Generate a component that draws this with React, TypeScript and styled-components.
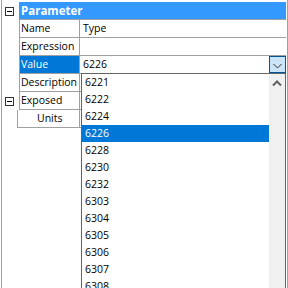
import React from "react";
import styled, { createGlobalStyle } from "styled-components";

const Global = createGlobalStyle`
  html, body { margin: 0; padding: 0; background: #fff; }
  body {
    font-family: "Open Sans", "Liberation Sans", sans-serif;
    font-size: 10.5px;
    color: #000;
  }
  #root { width: 288px; height: 288px; }
`;

const Screen = styled.div`
  position: relative;
  width: 288px;
  height: 288px;
  overflow: hidden;
  background: #fff;
`;

const Frame = styled.div`
  box-sizing: border-box;
  width: 287px;
  height: 288px;
  margin-left: 1px;
  border-left: 1px solid #a0a0a0;
  border-right: 1px solid #a0a0a0;
  padding: 2px 1px 0 0;
  display: flex;
  flex-direction: column;
`;

const Row = styled.div`
  display: flex;
  height: 18px;
`;

const Gutter = styled.div<{ $w: number }>`
  flex: none;
  width: ${(p) => p.$w}px;
  display: flex;
  align-items: center;
  padding-left: 3px;
  box-sizing: border-box;
`;

const Category = styled.div`
  flex: 1;
  box-sizing: border-box;
  background: #3399ff;
  border-bottom: 1px solid #a0a0a0;
  color: #fff;
  font-weight: bold;
  font-size: 11.5px;
  line-height: 17px;
  padding-left: 2px;
  white-space: nowrap;
`;

const NameCell = styled.div<{ $selected?: boolean; $w: number; $pad: number }>`
  flex: none;
  box-sizing: border-box;
  width: ${(p) => p.$w}px;
  border-left: 1px solid #a0a0a0;
  border-right: 1px solid #a0a0a0;
  border-bottom: 1px solid #a0a0a0;
  padding-left: ${(p) => p.$pad}px;
  line-height: 17px;
  white-space: nowrap;
  overflow: hidden;
  background: ${(p) => (p.$selected ? "#0078d7" : "#fff")};
  color: ${(p) => (p.$selected ? "#fff" : "#000")};
`;

const ValueCell = styled.div`
  flex: 1;
  box-sizing: border-box;
  border-bottom: 1px solid #a0a0a0;
  padding-left: 3px;
  line-height: 17px;
  display: flex;
  justify-content: space-between;
  align-items: flex-start;
`;

const DropButton = styled.div`
  flex: none;
  box-sizing: border-box;
  width: 17px;
  height: 17px;
  background: #cce4f7;
  border: 1px solid #005499;
  display: flex;
`;

const Dropdown = styled.div`
  position: absolute;
  left: 81px;
  top: 73px;
  width: 205px;
  height: 240px;
  box-sizing: border-box;
  border: 1px solid #646464;
  border-bottom: none;
  background: #fff;
  display: flex;
`;

const List = styled.div`
  flex: 1;
  display: flex;
  flex-direction: column;
`;

const Item = styled.div<{ $selected?: boolean }>`
  flex: none;
  height: 17px;
  line-height: 17px;
  padding-left: 3px;
  background: ${(p) => (p.$selected ? "#0078d7" : "transparent")};
  color: ${(p) => (p.$selected ? "#fff" : "#000")};
`;

const Scrollbar = styled.div`
  flex: none;
  width: 16px;
  background: #f0f0f0;
`;

const Collapse = () => (
  <svg width="9" height="9" viewBox="0 0 9 9">
    <rect x="0.5" y="0.5" width="8" height="8" fill="#fff" stroke="#333" />
    <path d="M2 4.5 H7" stroke="#000" strokeWidth="1" />
  </svg>
);

const ChevronDown = () => (
  <svg width="15" height="15" viewBox="0 0 15 15">
    <path d="M3.5 7 L7.5 11 L11.5 7" fill="none" stroke="#333" strokeWidth="1" />
  </svg>
);

const ChevronUp = () => (
  <svg width="16" height="17" viewBox="0 0 16 17">
    <path d="M4 11.5 L8 7.5 L12 11.5" fill="none" stroke="#606060" strokeWidth="2" />
  </svg>
);

const items = [
  "6221", "6222", "6224", "6226", "6228", "6230", "6232",
  "6303", "6304", "6305", "6306", "6307", "6308",
];

export default function App() {
  return (
    <Screen>
      <Global />
      <Frame>
        <Row>
          <Gutter $w={17}><Collapse /></Gutter>
          <Category>Parameter</Category>
        </Row>
        <Row>
          <Gutter $w={17} />
          <NameCell $w={61} $pad={1}>Name</NameCell>
          <ValueCell>Type</ValueCell>
        </Row>
        <Row>
          <Gutter $w={17} />
          <NameCell $w={61} $pad={1}>Expression</NameCell>
          <ValueCell />
        </Row>
        <Row>
          <Gutter $w={17} />
          <NameCell $w={61} $pad={1} $selected>Value</NameCell>
          <ValueCell>
            <span>6226</span>
            <DropButton><ChevronDown /></DropButton>
          </ValueCell>
        </Row>
        <Row>
          <Gutter $w={17} />
          <NameCell $w={61} $pad={1}>Description</NameCell>
          <ValueCell />
        </Row>
        <Row>
          <Gutter $w={17}><Collapse /></Gutter>
          <NameCell $w={61} $pad={1}>Exposed</NameCell>
          <ValueCell />
        </Row>
        <Row>
          <Gutter $w={15} />
          <NameCell $w={63} $pad={19}>Units</NameCell>
          <ValueCell />
        </Row>
      </Frame>
      <Dropdown>
        <List>
          {items.map((v) => (
            <Item key={v} $selected={v === "6226"}>{v}</Item>
          ))}
        </List>
        <Scrollbar><ChevronUp /></Scrollbar>
      </Dropdown>
    </Screen>
  );
}
